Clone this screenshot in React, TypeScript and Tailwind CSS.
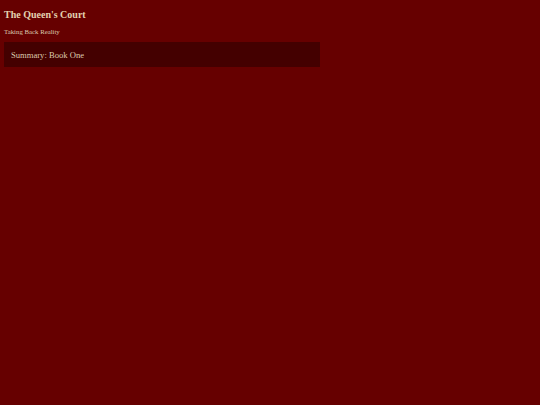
import React from 'react';

const App: React.FC = () => {
  return (
    <div className="min-h-[405px] w-full bg-[#660000] text-[#e3d2b0] px-[4px] pt-[8px]" style={{ fontFamily: '"Liberation Serif", "Times New Roman", serif' }}>
      <h1 className="text-[10px] font-bold leading-[14px]">The Queen's Court</h1>
      <p className="text-[6.8px] leading-[9px] mt-[5px] text-[#dccbb0]">Taking Back Reality</p>
      <div className="mt-[6px] w-[316px] h-[25px] bg-[#440000] flex items-center px-[7px] pt-[2px]">
        <span className="text-[8.6px] text-[#dccbae]">Summary: Book One</span>
      </div>
    </div>
  );
};

export default App;
